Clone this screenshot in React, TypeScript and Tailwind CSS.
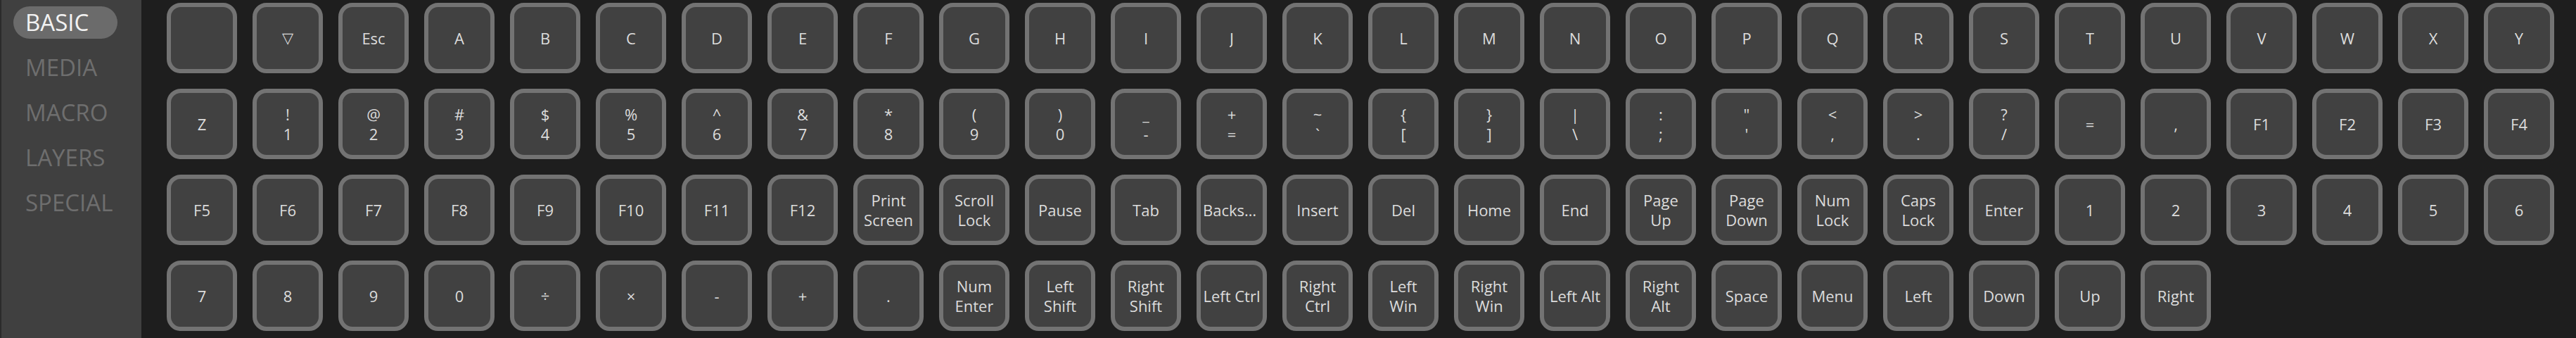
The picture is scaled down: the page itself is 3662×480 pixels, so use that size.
import React from 'react'

const tabs = ['BASIC', 'MEDIA', 'MACRO', 'LAYERS', 'SPECIAL']

// each key is a list of lines; a single string is one line
const keys: string[][] = [
  [''], ['▽'], ['Esc'],
  ...'ABCDEFGHIJKLMNOPQRSTUVWXY'.split('').map((c) => [c]),
  ['Z'], ['!', '1'], ['@', '2'], ['#', '3'], ['$', '4'], ['%', '5'], ['^', '6'], ['&', '7'], ['*', '8'],
  ['(', '9'], [')', '0'], ['_', '-'], ['+', '='], ['~', '`'], ['{', '['], ['}', ']'], ['|', '\\'],
  [':', ';'], ['"', "'"], ['<', ','], ['>', '.'], ['?', '/'], ['='], [','], ['F1'], ['F2'], ['F3'], ['F4'],
  ['F5'], ['F6'], ['F7'], ['F8'], ['F9'], ['F10'], ['F11'], ['F12'],
  ['Print', 'Screen'], ['Scroll', 'Lock'], ['Pause'], ['Tab'], ['Backspace'], ['Insert'], ['Del'],
  ['Home'], ['End'], ['Page', 'Up'], ['Page', 'Down'], ['Num', 'Lock'], ['Caps', 'Lock'], ['Enter'],
  ['1'], ['2'], ['3'], ['4'], ['5'], ['6'],
  ['7'], ['8'], ['9'], ['0'], ['÷'], ['×'], ['-'], ['+'], ['.'],
  ['Num', 'Enter'], ['Left', 'Shift'], ['Right', 'Shift'], ['Left Ctrl'], ['Right', 'Ctrl'],
  ['Left', 'Win'], ['Right', 'Win'], ['Left Alt'], ['Right', 'Alt'], ['Space'], ['Menu'],
  ['Left'], ['Down'], ['Up'], ['Right'],
]

const Key = ({ lines }: { lines: string[] }) => {
  const isTri = lines[0] === '▽'
  return (
    <div className="w-[100px] h-[100px] shrink-0 rounded-[20px] border-[6px] border-[#737373] bg-[#414141] flex flex-col items-center justify-center px-[3px] overflow-hidden">
      {lines.map((l, i) => (
        <div
          key={i}
          className={
            isTri
              ? "text-[21px] leading-[28px] text-[#dcdcdc] font-['DejaVu_Sans',sans-serif]"
              : 'max-w-full truncate text-[22px] leading-[28px] text-[#dcdcdc]'
          }
        >
          {l}
        </div>
      ))}
    </div>
  )
}

export default function App() {
  return (
    <div className="flex w-[3662px] h-[480px] overflow-hidden bg-[#1e1e1e] font-['Open_Sans',sans-serif]">
      <div className="w-[201px] shrink-0 h-full bg-[#404040] border-l-2 border-[#2b2b2b] pt-[9px] pl-[17px] flex flex-col gap-[18px]">
        {tabs.map((t, i) => (
          <div
            key={t}
            className={
              i === 0
                ? 'w-[148px] h-[46px] rounded-full bg-[#6b6b6b] pl-[17px] flex items-center text-[33px] text-[#f2f2f2]'
                : 'w-[148px] h-[46px] pl-[17px] flex items-center text-[33px] text-[#6e6e6e]'
            }
          >
            {t}
          </div>
        ))}
      </div>
      <div className="flex-1 pl-[36px] pt-[4px] flex flex-wrap content-start gap-[22px]">
        {keys.map((k, i) => (
          <Key key={i} lines={k} />
        ))}
      </div>
    </div>
  )
}
